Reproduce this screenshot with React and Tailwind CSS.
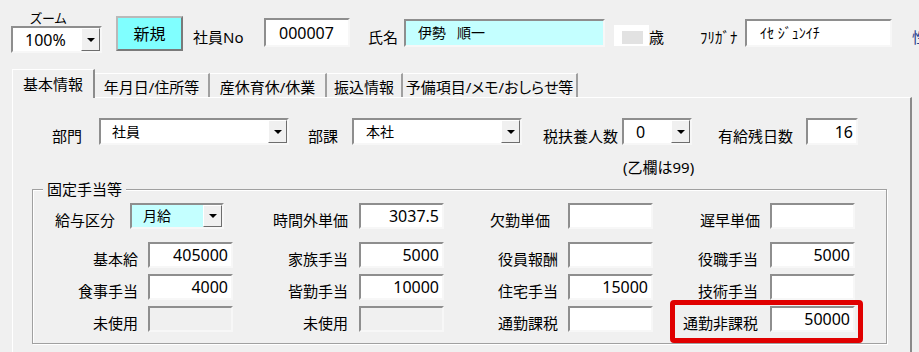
import React from "react";

const Box = ({ cls = "", children }) => (
  <div
    className={`box-border border-2 border-t-[#8e8e8e] border-l-[#8e8e8e] border-r-[#f7f7f7] border-b-[#f7f7f7] ${cls}`}
  >
    {children}
  </div>
);

const DropBtn = () => (
  <div className="box-border w-[19px] h-full shrink-0 border border-t-white border-l-white border-r-[#6d6d6d] border-b-[#6d6d6d] bg-[#f0f0f0] flex items-center justify-center">
    <div className="w-0 h-0 border-l-[4px] border-r-[4px] border-t-[4px] border-l-transparent border-r-transparent border-t-black" />
  </div>
);

const Combo = ({ cls = "", textCls = "", text }) => (
  <Box cls={`flex shrink-0 ${cls}`}>
    <div className={`flex-1 flex items-center whitespace-nowrap ${textCls}`}>{text}</div>
    <DropBtn />
  </Box>
);

const Label = ({ cls = "", children }) => (
  <div className={`shrink-0 text-right text-[15px] leading-[18px] whitespace-nowrap ${cls}`}>{children}</div>
);

const Num = ({ cls = "", v = "", disabled = false }) => (
  <Box
    cls={`shrink-0 w-[85px] h-[26px] flex items-center justify-end pr-[3px] text-[16px] leading-none ${
      disabled ? "bg-[#f0f0f0]" : "bg-white"
    } ${cls}`}
  >
    {v}
  </Box>
);

export default function App() {
  return (
    <div className="relative w-[919px] h-[352px] overflow-hidden bg-[#f0f0f0] text-black font-['Noto_Sans','Noto_Sans_CJK_JP',sans-serif]">
      {/* top bar */}
      <div className="flex items-start h-[69px] w-[960px] [&>*]:shrink-0">
        <div className="ml-[11px] mt-[10px] w-[91px]">
          <div className="h-[16px] pl-[19px] text-[13px] leading-[16px] [font-feature-settings:'palt']">ズーム</div>
          <Combo cls="w-[91px] h-[27px] bg-white" textCls="pl-[12px] text-[16px] leading-none" text="100%" />
        </div>
        <div className="ml-[14px] mt-[16px] box-border w-[67px] h-[35px] border-2 border-t-[#b9b9b9] border-l-[#b9b9b9] border-r-[#7a7a7a] border-b-[#7a7a7a] bg-[#80ffff] flex items-center justify-center text-[16px] leading-none">
          新規
        </div>
        <div className="ml-[10px] mt-[28px] w-[71px] text-[15px] leading-[18px] whitespace-nowrap">社員No</div>
        <Box cls="mt-[18px] w-[86px] h-[29px] bg-white flex items-center pl-[13px] text-[16px] leading-none">000007</Box>
        <div className="ml-[18px] mt-[28px] w-[36px] text-[15px] leading-[18px]">氏名</div>
        <Box cls="mt-[19px] w-[201px] h-[28px] bg-[#c4ffff] flex items-center pl-[12px] text-[14px] leading-none">
          <span>伊勢</span>
          <span className="ml-[11px]">順一</span>
        </Box>
        <div className="ml-[9px] mt-[25px] w-[35px] h-[21px] bg-white pl-[8px] pt-[6px]">
          <div className="w-[21px] h-[13px] bg-[#e2e2e2]" />
        </div>
        <div className="mt-[28px] w-[51px] text-[15px] leading-[18px]">歳</div>
        <div className="mt-[28px] w-[45px] text-[15px] leading-[18px] whitespace-nowrap">ﾌﾘｶﾞﾅ</div>
        <Box cls="mt-[19px] w-[147px] h-[28px] bg-white flex items-center pl-[13px] text-[14px] leading-none whitespace-pre">ｲｾ ｼﾞｭﾝｲﾁ</Box>
        <div className="ml-[20px] mt-[28px] text-[15px] leading-[18px] text-[#1e3a8a]">性</div>
      </div>

      {/* tabs */}
      <div className="flex items-end h-[28px] pl-[12px] text-[15px] leading-[18px] whitespace-nowrap [&>*]:shrink-0">
        <div className="relative z-10 -mb-px box-border w-[83px] h-[29px] border-t border-l border-r-2 border-t-white border-l-white border-r-[#8c8c8c] bg-[#f0f0f0] pt-[5px] text-center">
          基本情報
        </div>
        <div className="box-border w-[115px] h-[24px] border-t border-r-2 border-t-white border-r-[#a0a0a0] pt-[4px] text-center">
          年月日/住所等
        </div>
        <div className="box-border w-[117px] h-[24px] border-t border-r-2 border-t-white border-r-[#a0a0a0] pt-[4px] text-center">
          産休育休/休業
        </div>
        <div className="box-border w-[76px] h-[24px] border-t border-r-2 border-t-white border-r-[#a0a0a0] pt-[4px] text-center">
          振込情報
        </div>
        <div className="box-border w-[175px] h-[24px] border-t border-r-2 border-t-white border-r-[#a0a0a0] pt-[4px] text-center [font-feature-settings:'palt']">
          予備項目/メモ/おしらせ等
        </div>
      </div>

      {/* panel */}
      <div className="ml-[12px] box-border w-[900px] h-[300px] border-l border-t border-r-2 border-l-white border-t-white border-r-[#8a8a8a]">
        {/* row 1 */}
        <div className="flex items-end mt-[20px]">
          <Label cls="ml-[39px] w-[47px] !text-left">部門</Label>
          <Combo cls="w-[190px] h-[27px] bg-white" textCls="pl-[11px] text-[14px] leading-none" text="社員" />
          <Label cls="w-[63px] pl-[19px] !text-left">部課</Label>
          <Combo cls="w-[170px] h-[27px] bg-white" textCls="pl-[12px] text-[14px] leading-none" text="本社" />
          <Label cls="w-[100px] pl-[21px] !text-left">税扶養人数</Label>
          <Combo cls="w-[70px] h-[27px] bg-white" textCls="pl-[12px] text-[16px] leading-none" text="0" />
          <Label cls="w-[114px] pl-[26px] !text-left">有給残日数</Label>
          <Box cls="shrink-0 w-[52px] h-[27px] bg-white flex items-center justify-end pr-[3px] text-[16px] leading-none">16</Box>
        </div>
        <div className="mt-[13px] pl-[610px] text-[15px] leading-[18px] whitespace-nowrap">(乙欄は99)</div>

        {/* frame */}
        <div className="mt-[13px] ml-[19px] box-border w-[855px] h-[155px] border border-[#a0a0a0] shadow-[inset_1px_1px_0_white,1px_1px_0_white]">
          <div className="-mt-[10px] ml-[10px] w-fit px-[4px] bg-[#f0f0f0] text-[15px] leading-[18px]">固定手当等</div>

          <div className="flex items-end mt-[5px]">
            <Label cls="w-[82px]">給与区分</Label>
            <Combo cls="ml-[15px] w-[94px] h-[26px] bg-[#c4ffff]" textCls="pl-[11px] text-[14px] leading-none" text="月給" />
            <Label cls="w-[124px]">時間外単価</Label>
            <Num cls="ml-[11px]" v="3037.5" />
            <Label cls="w-[106px]">欠勤単価</Label>
            <Num cls="ml-[18px]" />
            <Label cls="w-[107px]">遅早単価</Label>
            <Num cls="ml-[10px]" />
          </div>

          <div className="flex items-end mt-[13px]">
            <Label cls="w-[105px]">基本給</Label>
            <Num cls="ml-[10px]" v="405000" />
            <Label cls="w-[115px]">家族手当</Label>
            <Num cls="ml-[11px]" v="5000" />
            <Label cls="w-[114px]">役員報酬</Label>
            <Num cls="ml-[10px]" />
            <Label cls="w-[105px]">役職手当</Label>
            <Num cls="ml-[12px]" v="5000" />
          </div>

          <div className="flex items-end mt-[6px]">
            <Label cls="w-[105px]">食事手当</Label>
            <Num cls="ml-[10px]" v="4000" />
            <Label cls="w-[115px]">皆勤手当</Label>
            <Num cls="ml-[11px]" v="10000" />
            <Label cls="w-[114px]">住宅手当</Label>
            <Num cls="ml-[10px]" v="15000" />
            <Label cls="w-[105px]">技術手当</Label>
            <Num cls="ml-[12px]" />
          </div>

          <div className="flex items-end mt-[6px]">
            <Label cls="w-[105px]">未使用</Label>
            <Num cls="ml-[10px]" disabled />
            <Label cls="w-[115px]">未使用</Label>
            <Num cls="ml-[11px]" disabled />
            <Label cls="w-[114px]">通勤課税</Label>
            <Num cls="ml-[10px]" />
            <Label cls="w-[105px]">通勤非課税</Label>
            <Num cls="ml-[12px]" v="50000" />
          </div>
        </div>
      </div>

      {/* red highlight annotation */}
      <div className="absolute left-[670px] top-[300px] box-border w-[193px] h-[43px] border-[5px] border-[#e00000] rounded-[4px]" />
    </div>
  );
}
